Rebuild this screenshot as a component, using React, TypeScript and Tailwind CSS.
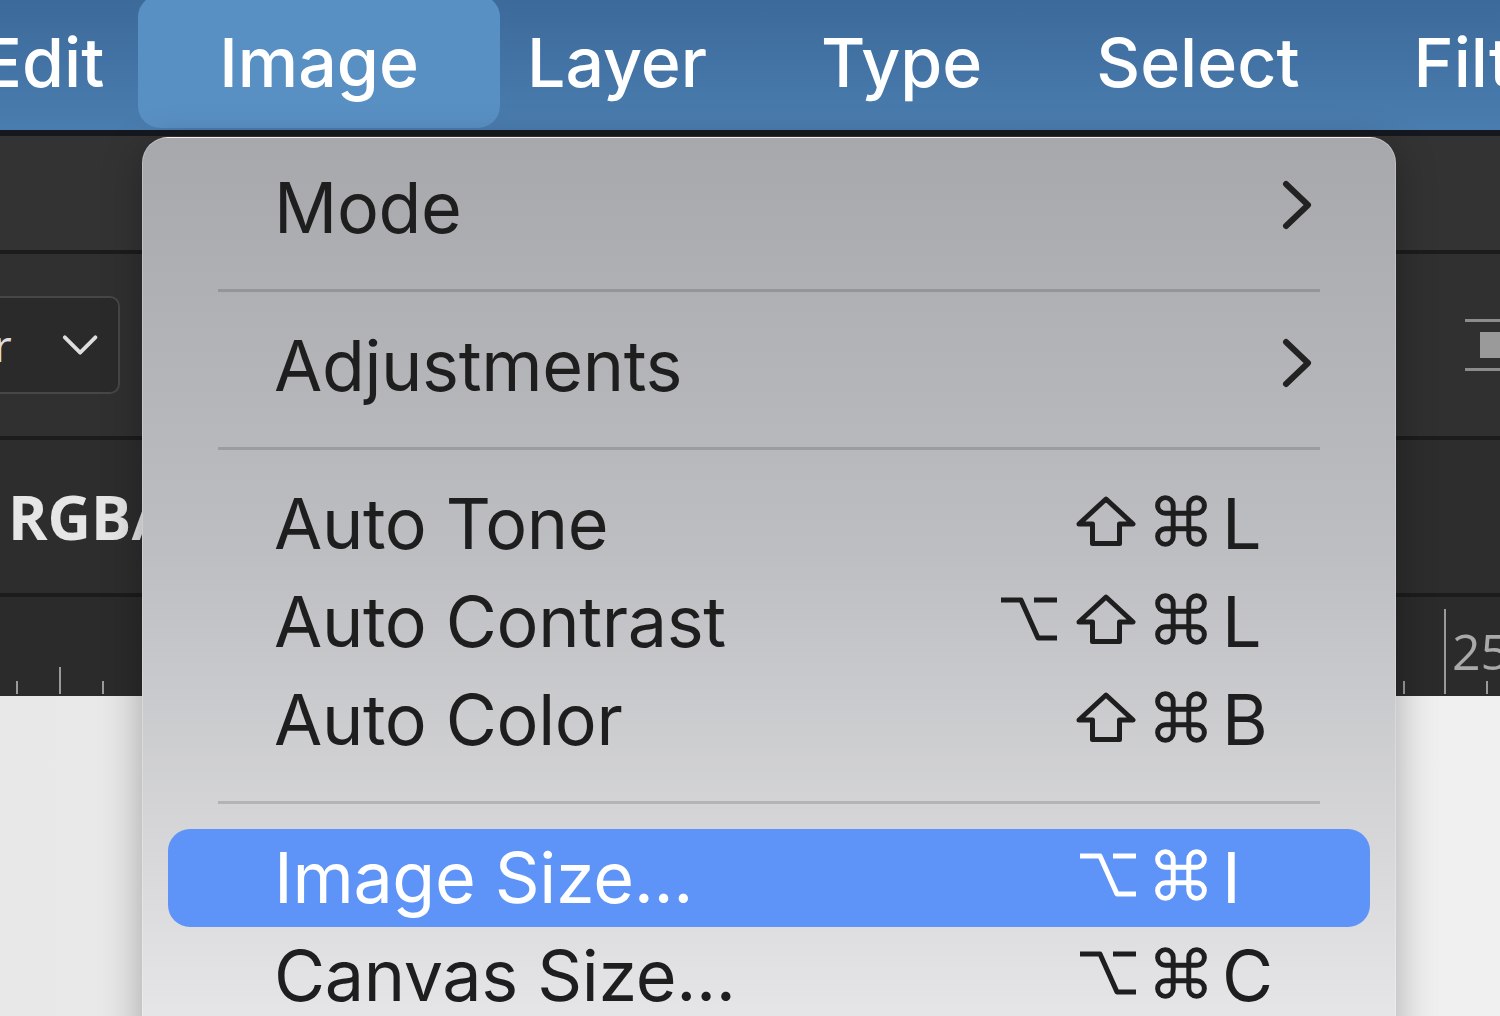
import clsx from 'clsx';

type Mod = 'opt' | 'shift' | 'cmd';

type Entry =
  | { kind: 'sep' }
  | { kind: 'item'; label: string; sub?: boolean; mods?: Mod[]; keyChar?: string; active?: boolean };

const MENU_BAR = ['Edit', 'Image', 'Layer', 'Type', 'Select', 'Filter'];

const ENTRIES: Entry[] = [
  { kind: 'item', label: 'Mode', sub: true },
  { kind: 'sep' },
  { kind: 'item', label: 'Adjustments', sub: true },
  { kind: 'sep' },
  { kind: 'item', label: 'Auto Tone', mods: ['shift', 'cmd'], keyChar: 'L' },
  { kind: 'item', label: 'Auto Contrast', mods: ['opt', 'shift', 'cmd'], keyChar: 'L' },
  { kind: 'item', label: 'Auto Color', mods: ['shift', 'cmd'], keyChar: 'B' },
  { kind: 'sep' },
  { kind: 'item', label: 'Image Size...', mods: ['opt', 'cmd'], keyChar: 'I', active: true },
  { kind: 'item', label: 'Canvas Size...', mods: ['opt', 'cmd'], keyChar: 'C' },
];

function ShiftGlyph() {
  return (
    <svg width="60" height="50" viewBox="0 0 60 50" fill="none" stroke="currentColor" strokeWidth="5" strokeLinejoin="round">
      <path d="M30 3 L57 28 H43.5 V47.5 H16.5 V28 H3 Z" />
    </svg>
  );
}

function CmdGlyph() {
  return (
    <svg width="52" height="52" viewBox="2 2 20 20" fill="none" stroke="currentColor" strokeWidth="1.9" strokeLinecap="round" strokeLinejoin="round">
      <path d="M15 6v12a3 3 0 1 0 3-3H6a3 3 0 1 0 3 3V6a3 3 0 1 0-3 3h12a3 3 0 1 0-3-3" />
    </svg>
  );
}

function OptGlyph() {
  return (
    <svg width="56" height="48" viewBox="0 0 56 48" fill="none" stroke="currentColor" strokeWidth="5" strokeLinejoin="round">
      <path d="M0 5 H20 L37 43 H56 M33 5 H56" />
    </svg>
  );
}

function ChevronRight() {
  return (
    <svg width="30" height="50" viewBox="0 0 30 50" fill="none" stroke="currentColor" strokeWidth="6" strokeLinecap="round" strokeLinejoin="round">
      <path d="M4 4 L26 25 L4 46" />
    </svg>
  );
}

const GLYPHS: Record<Mod, () => JSX.Element> = {
  opt: OptGlyph,
  shift: ShiftGlyph,
  cmd: CmdGlyph,
};

function MenuBar() {
  return (
    <div className="flex h-[136px] shrink-0 items-start border-b-[6px] border-[#15191f] bg-linear-to-b from-[#3c6a9a] to-[#4a7daf] font-['Inter',sans-serif] text-[68px] font-medium text-white">
      <div className="-ml-[76px] flex items-start">
        {MENU_BAR.map((name) =>
          name === 'Image' ? (
            <div
              key={name}
              className="-ml-[23px] -mr-[30px] -mt-[5px] flex h-[133px] items-center rounded-[22px] bg-[#5990c4] px-[81px]"
            >
              {name}
            </div>
          ) : (
            <div key={name} className="flex h-[123px] items-center px-[57px]">
              {name}
            </div>
          ),
        )}
      </div>
    </div>
  );
}

function Workspace() {
  return (
    <div className="flex flex-1 flex-col">
      <div className="h-[114px] bg-[#333333]" />
      <div className="h-[4px] bg-[#1c1c1c]" />
      <div className="flex h-[182px] items-center justify-between bg-[#303030]">
        <div className="-ml-[100px] flex h-[98px] w-[220px] items-center justify-end gap-[50px] rounded-[10px] border-2 border-[#474747] bg-[#2a2a2a] pr-[20px] font-['Open_Sans',sans-serif] text-[44px] text-[#dcdcdc]">
          <span>Color</span>
          <svg width="38" height="24" viewBox="0 0 38 24" fill="none" stroke="#dedede" strokeWidth="4" strokeLinecap="round" strokeLinejoin="round">
            <path d="M3 4 L19 20 L35 4" />
          </svg>
        </div>
        <svg className="-mr-[10px]" width="45" height="56" viewBox="0 0 45 56">
          <rect x="0" y="2" width="45" height="3" fill="#8c8c8c" />
          <rect x="15" y="15" width="30" height="26" fill="#9a9a9a" />
          <rect x="0" y="51" width="45" height="3" fill="#8c8c8c" />
        </svg>
      </div>
      <div className="h-[4px] bg-[#1c1c1c]" />
      <div className="flex h-[153px] items-center bg-[#2d2d2d] pl-[8px] font-['Open_Sans',sans-serif] text-[60px] font-bold text-[#e6e6e6]">
        RGB/8
      </div>
      <div className="h-[4px] bg-[#1c1c1c]" />
      <div className="h-[99px] bg-[#2b2b2b]">
        <svg width="1500" height="99" viewBox="0 0 1500 99">
          <g stroke="#9a9a9a" strokeWidth="2">
            <line x1="17" y1="84" x2="17" y2="97" />
            <line x1="60" y1="70" x2="60" y2="97" />
            <line x1="103" y1="84" x2="103" y2="97" />
            <line x1="1404" y1="84" x2="1404" y2="97" />
            <line x1="1445" y1="12" x2="1445" y2="97" />
            <line x1="1487" y1="84" x2="1487" y2="97" />
          </g>
          <text x="1452" y="73" fill="#a9a9a9" fontSize="50" fontFamily="Open Sans, sans-serif">
            25
          </text>
        </svg>
      </div>
      <div className="flex-1 bg-linear-to-r from-[#e8e8e8] to-[#f0f0f0]" />
    </div>
  );
}

function ImageMenu() {
  return (
    <div className="absolute left-[142px] top-[137px] h-[920px] w-[1254px] rounded-t-[26px] border border-white/25 bg-linear-to-b from-[#a7a8ac] via-[#bdbec1] via-45% to-[#e9e9eb] pt-[21px] font-['Inter',sans-serif] text-[70px] shadow-[0_10px_40px_rgba(0,0,0,0.3)]">
      {ENTRIES.map((entry, i) =>
        entry.kind === 'sep' ? (
          <div key={i} className="mx-[75px] flex h-[60px] items-center pt-[7px]">
            <div className="h-[3px] w-full bg-black/15" />
          </div>
        ) : (
          <div
            key={i}
            className={clsx(
              'mx-[25px] flex h-[98px] items-center rounded-[22px] pl-[106px] pr-[58px]',
              entry.active ? 'bg-[#5e93f7] text-white' : 'text-[#1e1e1f]',
            )}
          >
            <span className="flex-1 leading-none tracking-[-0.005em]">{entry.label}</span>
            {entry.sub ? (
              <span className="mb-[6px] text-[#222222]">
                <ChevronRight />
              </span>
            ) : (
              <div className="flex items-center">
                <div className="mb-[6px] flex items-center gap-[19px]">
                  {entry.mods?.map((m) => {
                    const Glyph = GLYPHS[m];
                    return <Glyph key={m} />;
                  })}
                </div>
                <span className="ml-[15px] w-[90px] leading-none">{entry.keyChar}</span>
              </div>
            )}
          </div>
        ),
      )}
    </div>
  );
}

export default function App() {
  return (
    <div className="relative flex h-[1016px] w-[1500px] flex-col overflow-hidden bg-[#ececec]">
      <MenuBar />
      <Workspace />
      <ImageMenu />
    </div>
  );
}
